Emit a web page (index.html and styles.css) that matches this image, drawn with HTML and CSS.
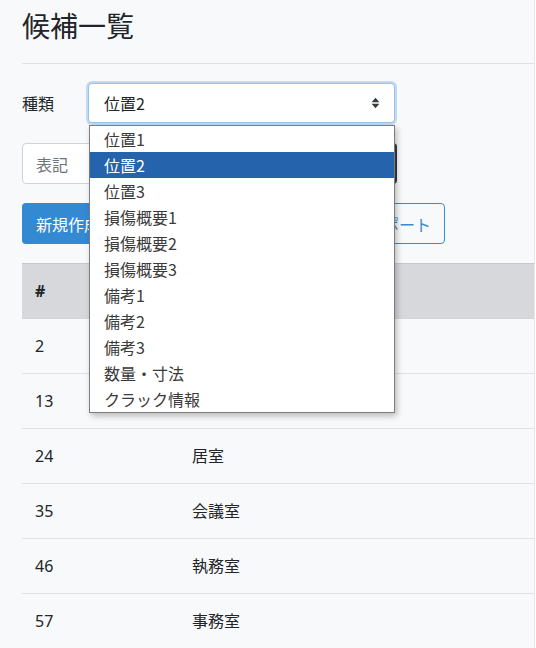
FILE: index.html
```html
<!DOCTYPE html>
<html lang="ja">
  <head>
    <meta charset="UTF-8" />
    <meta name="viewport" content="width=device-width, initial-scale=1.0" />
    <title>候補一覧</title>
    <link rel="stylesheet" href="styles.css">
  </head>
  <body>
    <div class="page">
      <h1 class="title">候補一覧</h1>
      <hr class="rule" />

      <div class="field-row">
        <label class="field-label">種類</label>
        <div class="select is-open">
          <span class="select-value">位置2</span>
          <svg class="select-caret" viewBox="0 0 10 14">
            <polygon points="5 1 9.5 6 0.5 6"></polygon>
            <polygon points="5 13 9.5 8 0.5 8"></polygon>
          </svg>
          <ul class="select-menu">
            <li>位置1</li>
            <li class="active">位置2</li>
            <li>位置3</li>
            <li>損傷概要1</li>
            <li>損傷概要2</li>
            <li>損傷概要3</li>
            <li>備考1</li>
            <li>備考2</li>
            <li>備考3</li>
            <li>数量・寸法</li>
            <li>クラック情報</li>
          </ul>
        </div>
      </div>

      <div class="search">
        <input class="search-input" type="text" placeholder="表記" />
        <button class="btn btn-dark">検索</button>
      </div>

      <div class="actions">
        <button class="btn btn-primary">新規作成</button>
        <button class="btn btn-outline">Excelエクスポート</button>
        <button class="btn btn-outline">Excelインポート</button>
      </div>

      <table class="list">
        <thead>
          <tr>
            <th class="col-id">#</th>
            <th>表記</th>
          </tr>
        </thead>
        <tbody>
          <tr><td>2</td><td>トイレ</td></tr>
          <tr><td>13</td><td>廊下</td></tr>
          <tr><td>24</td><td>居室</td></tr>
          <tr><td>35</td><td>会議室</td></tr>
          <tr><td>46</td><td>執務室</td></tr>
          <tr><td>57</td><td>事務室</td></tr>
        </tbody>
      </table>
    </div>
  </body>
</html>
```

FILE: styles.css
```css
/* Page frame */
body {
  margin: 0;
  background: #ffffff;
  color: #212529;
  font-family: "Noto Sans", "Noto Sans CJK JP", sans-serif;
  font-size: 16px;
  line-height: 1.5;
}

.page {
  width: 512px;
  min-height: 648px;
  padding: 0 0 0 22px;
  background: #f8f9fa;
  border-right: 1px solid #e3e5e8;
}

/* --- Heading --- */
.title {
  margin: 0;
  padding-top: 8px;
  font-family: "Noto Sans CJK JP", sans-serif;
  font-size: 28px;
  font-weight: 400;
  line-height: 34px;
}

.rule {
  margin: 21px 0 0;
  border: 0;
  border-top: 1px solid #dee2e6;
}

/* --- Type selector --- */
.field-row {
  display: flex;
  align-items: center;
  margin-top: 19px;
}

.field-label {
  width: 66px;
  font-family: "Noto Sans CJK JP", sans-serif;
}

.select {
  position: relative;
  display: flex;
  align-items: center;
  box-sizing: border-box;
  width: 307px;
  height: 40px;
  padding: 0 14px 0 15px;
  background: #ffffff;
  border: 1px solid #97c2ea;
  border-radius: 4px;
  box-shadow: 0 0 0 2px rgba(120, 176, 228, 0.42);
}

.select-value {
  flex: 1;
  font-family: "Noto Sans CJK JP", sans-serif;
}

.select-caret {
  width: 9px;
  height: 12px;
  fill: #343a40;
}

/* open option list of the select */
.select-menu {
  position: absolute;
  top: 41px;
  left: 0;
  width: 304px;
  margin: 0;
  padding: 0;
  list-style: none;
  background: #ffffff;
  border: 1px solid #7d7d7d;
  box-shadow: 2px 3px 6px rgba(0, 0, 0, 0.25);
  z-index: 10;
}

.select-menu li {
  height: 26px;
  padding-left: 14px;
  color: #3a3a3a;
  font-family: "Noto Sans CJK JP", sans-serif;
  line-height: 26px;
}

.select-menu li.active {
  background: #2563ad;
  color: #ffffff;
}

/* --- Search --- */
.search {
  display: flex;
  width: 375px;
  margin-top: 20px;
}

.search-input {
  flex: 1;
  height: 41px;
  box-sizing: border-box;
  padding: 0 13px;
  border: 1px solid #ced4da;
  border-radius: 4px 0 0 4px;
  background: #ffffff;
  font: inherit;
  font-family: "Noto Sans CJK JP", sans-serif;
}

.search-input::placeholder {
  color: #6c757d;
}

/* --- Buttons --- */
.actions {
  display: flex;
  gap: 12px;
  margin-top: 19px;
}

.btn {
  height: 41px;
  padding: 0 13px;
  border: 1px solid transparent;
  border-radius: 4px;
  font-family: "Noto Sans CJK JP", sans-serif;
  font-size: 16px;
  white-space: nowrap;
}

.btn-dark {
  border-radius: 0 4px 4px 0;
  background: #343a40;
  color: #ffffff;
}

.btn-primary {
  background: #3489d3;
  color: #ffffff;
}

.btn-outline {
  background: transparent;
  border-color: #3a8bd3;
  color: #3a8bd3;
}

/* --- Table --- */
.list {
  width: 512px;
  margin-top: 19px;
  border-collapse: collapse;
}

.list th,
.list td {
  padding: 16px 13px;
  line-height: 22px;
  text-align: left;
  border-top: 1px solid #dee2e6;
  font-family: "Noto Sans", "Noto Sans CJK JP", sans-serif;
}

.list thead th {
  background: #d6d8db;
  border-top-color: #c6c8ca;
  border-bottom: 1px solid #d3d5d8;
  font-weight: 700;
}

.list .col-id {
  width: 131px;
}

.list tbody tr:last-child td {
  border-bottom: 1px solid #dee2e6;
}
```
